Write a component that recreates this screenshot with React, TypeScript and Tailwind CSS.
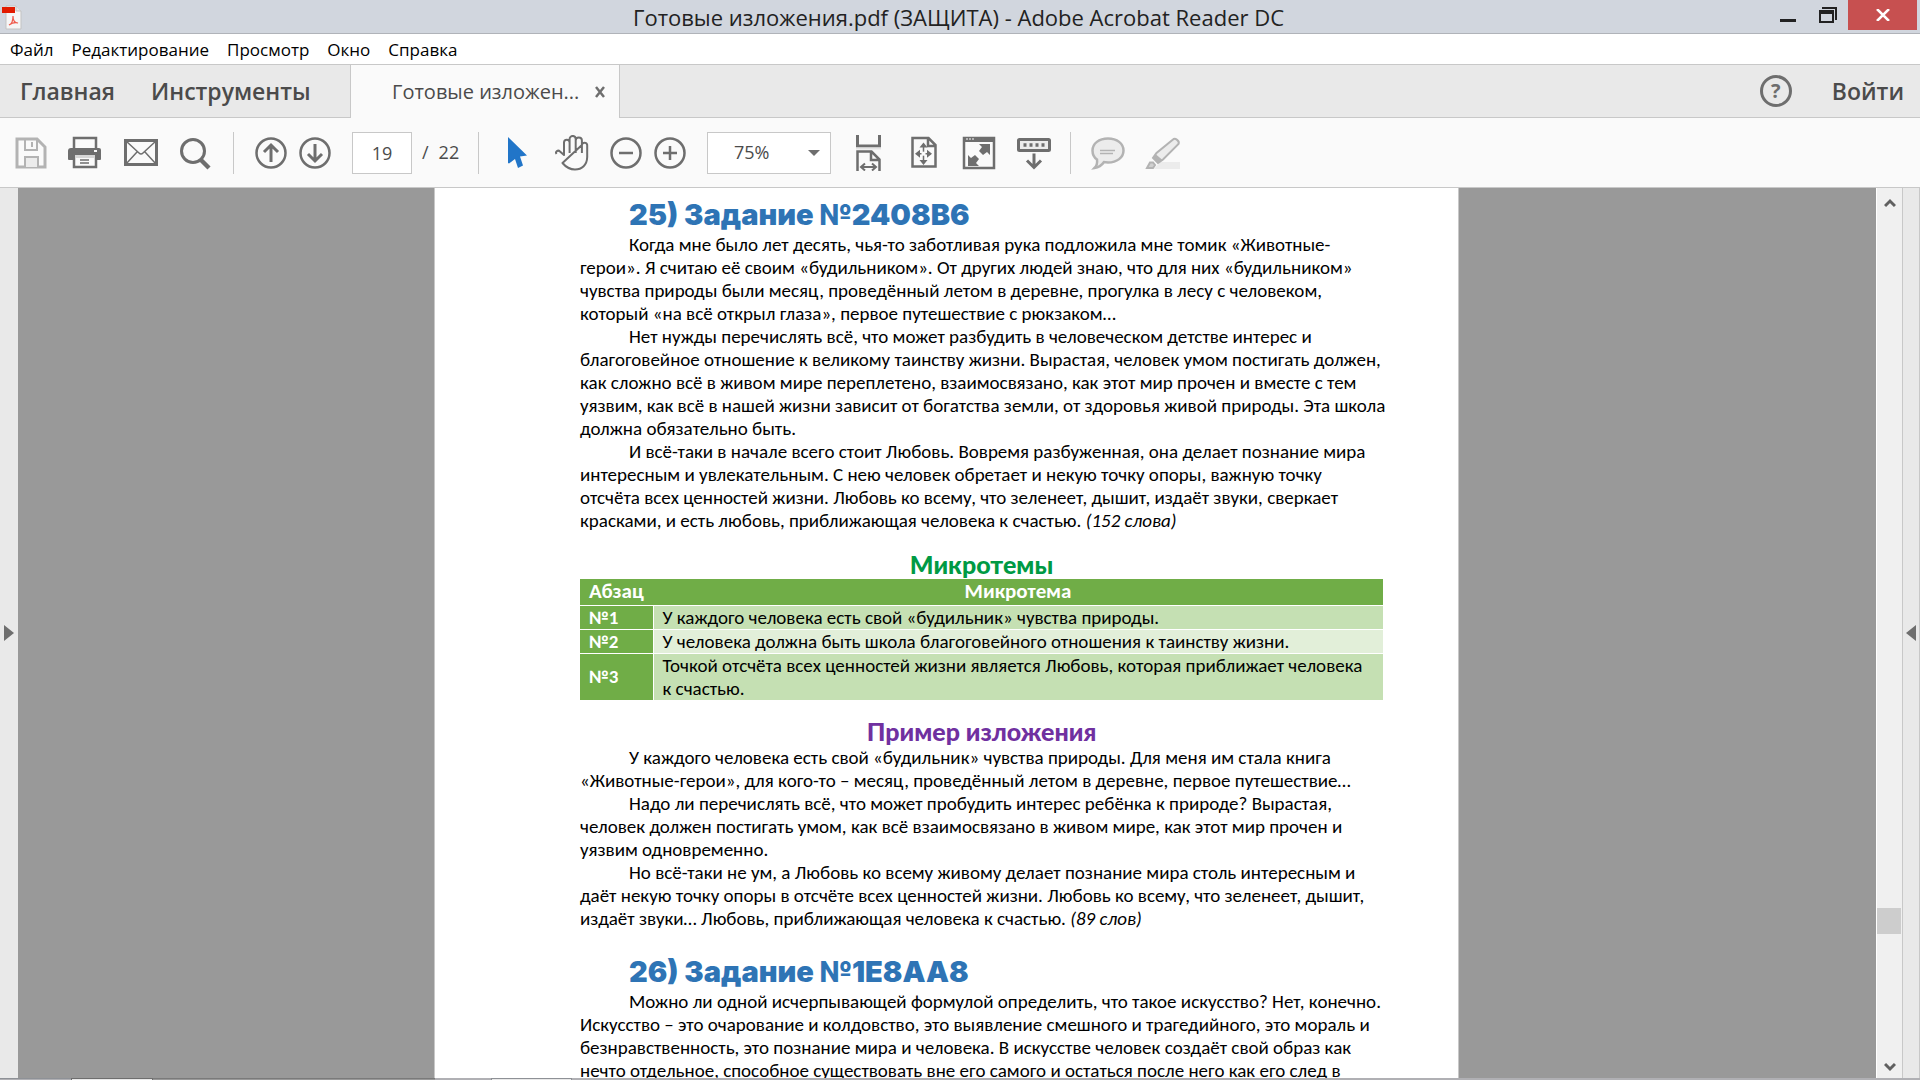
import type { ReactNode } from "react";

const MENU = ["Файл", "Редактирование", "Просмотр", "Окно", "Справка"];

const TASK_25 = [
  [
    "Когда мне было лет десять, чья-то заботливая рука подложила мне томик «Животные-",
    "герои». Я считаю её своим «будильником». От других людей знаю, что для них «будильником»",
    "чувства природы были месяц, проведённый летом в деревне, прогулка в лесу с человеком,",
    "который «на всё открыл глаза», первое путешествие с рюкзаком…",
  ],
  [
    "Нет нужды перечислять всё, что может разбудить в человеческом детстве интерес и",
    "благоговейное отношение к великому таинству жизни. Вырастая, человек умом постигать должен,",
    "как сложно всё в живом мире переплетено, взаимосвязано, как этот мир прочен и вместе с тем",
    "уязвим, как всё в нашей жизни зависит от богатства земли, от здоровья живой природы. Эта школа",
    "должна обязательно быть.",
  ],
  [
    "И всё-таки в начале всего стоит Любовь. Вовремя разбуженная, она делает познание мира",
    "интересным и увлекательным. С нею человек обретает и некую точку опоры, важную точку",
    "отсчёта всех ценностей жизни. Любовь ко всему, что зеленеет, дышит, издаёт звуки, сверкает",
    "красками, и есть любовь, приближающая человека к счастью. ",
  ],
];

const EXAMPLE = [
  [
    "У каждого человека есть свой «будильник» чувства природы. Для меня им стала книга",
    "«Животные-герои», для кого-то – месяц, проведённый летом в деревне, первое путешествие…",
  ],
  [
    "Надо ли перечислять всё, что может пробудить интерес ребёнка к природе? Вырастая,",
    "человек должен постигать умом, как всё взаимосвязано в живом мире, как этот мир прочен и",
    "уязвим одновременно.",
  ],
  [
    "Но всё-таки не ум, а Любовь ко всему живому делает познание мира столь интересным и",
    "даёт некую точку опоры в отсчёте всех ценностей жизни. Любовь ко всему, что зеленеет, дышит,",
    "издаёт звуки… Любовь, приближающая человека к счастью. ",
  ],
];

const TASK_26 = [
  [
    "Можно ли одной исчерпывающей формулой определить, что такое искусство? Нет, конечно.",
    "Искусство – это очарование и колдовство, это выявление смешного и трагедийного, это мораль и",
    "безнравственность, это познание мира и человека. В искусстве человек создаёт свой образ как",
    "нечто отдельное, способное существовать вне его самого и остаться после него как его след в",
  ],
];

const TOPICS = [
  { id: "№1", lines: ["У каждого человека есть свой «будильник» чувства природы."], bg: "bg-[#c5e0b3]" },
  { id: "№2", lines: ["У человека должна быть школа благоговейного отношения к таинству жизни."], bg: "bg-[#e2efd9]" },
  {
    id: "№3",
    lines: ["Точкой отсчёта всех ценностей жизни является Любовь, которая приближает человека", "к счастью."],
    bg: "bg-[#c5e0b3]",
  },
];

function Icon({ children, color = "text-[#6e6e6e]" }: { children: ReactNode; color?: string }) {
  return (
    <svg viewBox="0 0 36 36" fill="none" stroke="currentColor" strokeWidth="2.5" className={`h-9 w-9 ${color}`}>
      {children}
    </svg>
  );
}

function Tool({ label, narrow, children }: { label: string; narrow?: boolean; children: ReactNode }) {
  return (
    <button aria-label={label} className={`flex shrink-0 items-center justify-center ${narrow ? "w-11" : "w-[55px]"}`}>
      {children}
    </button>
  );
}

function Separator() {
  return <div className="h-[42px] w-px shrink-0 bg-[#c8c8c8]" />;
}

function Paragraphs({ items, note }: { items: string[][]; note?: string }) {
  return (
    <>
      {items.map((lines, i) => (
        <p key={i} className="whitespace-nowrap indent-[49px]">
          {lines.map((line, j) => (
            <span key={j}>
              {j > 0 && <br />}
              {line}
            </span>
          ))}
          {note && i === items.length - 1 && <em>{note}</em>}
        </p>
      ))}
    </>
  );
}

function TitleBar() {
  return (
    <header className="flex h-[34px] shrink-0 items-center border-b border-[#b0b3b9] bg-[#d1d6de] pr-[3px]">
      <div className="flex w-[150px] pl-0.5">
        <svg viewBox="0 0 24 26" className="h-[26px] w-6">
          <path d="M4 2h10l5 5v18H4z" fill="#f6f6f6" stroke="#c3c3c3" />
          <path d="M14 2v5h5" fill="#e4e4e4" stroke="#c3c3c3" />
          <path d="M0 3h13v6H0z" fill="#e21b00" />
          <path d="M7 21c3-1 4-5 4-9 0 5 2 7 5 7-4-1-6 0-9 2z" fill="none" stroke="#ef5a4c" strokeWidth="1.2" />
        </svg>
      </div>
      <h1 className="flex-1 text-center text-[22px] leading-7 text-[#222]">
        Готовые изложения.pdf (ЗАЩИТА) - Adobe Acrobat Reader DC
      </h1>
      <div className="flex h-full w-[150px] justify-end">
        <button aria-label="Свернуть" className="flex w-10 justify-center">
          <svg viewBox="0 0 16 30" className="h-[30px] w-4">
            <path d="M0 19h16v3H0z" fill="#222" />
          </svg>
        </button>
        <button aria-label="Восстановить" className="flex w-10 justify-center">
          <svg viewBox="0 0 18 30" className="h-[30px] w-[18px]" fill="none" stroke="#222">
            <path d="M3 8h14v12" strokeWidth="2" />
            <path d="M1 12v10h13V11z" strokeWidth="2" />
            <path d="M0 12h15" strokeWidth="4" />
          </svg>
        </button>
        <button aria-label="Закрыть" className="flex h-[30px] w-[69px] items-center justify-center bg-[#c75050]">
          <svg viewBox="0 0 14 12" className="h-3 w-3.5" stroke="#fff" strokeWidth="2.5">
            <path d="M1 0l12 12M13 0L1 12" />
          </svg>
        </button>
      </div>
    </header>
  );
}

function TabBar() {
  return (
    <div className="flex h-[53px] shrink-0 bg-[#e9e9e9] text-[23px] font-semibold text-[#4b4b4b]">
      <div className="flex w-[350px] items-center gap-9 border-b border-[#c8c8c8] pl-5">
        <button>Главная</button>
        <button>Инструменты</button>
      </div>
      <div className="flex w-[270px] items-center justify-between border-x border-[#c8c8c8] bg-[#fafafa] pr-[13px] pl-[41px]">
        <span className="text-[20px] font-normal">Готовые изложен...</span>
        <button aria-label="Закрыть вкладку">
          <svg viewBox="0 0 12 12" className="h-3 w-3" stroke="#6e6e6e" strokeWidth="2.5">
            <path d="M2 1l8 10M10 1L2 11" />
          </svg>
        </button>
      </div>
      <div className="flex flex-1 items-center justify-end gap-10 border-b border-[#c8c8c8] pr-4">
        <button
          aria-label="Помощь"
          className="flex h-8 w-8 items-center justify-center rounded-full border-[3px] border-[#6e6e6e] text-[20px] leading-none font-bold text-[#6e6e6e]"
        >
          ?
        </button>
        <button>Войти</button>
      </div>
    </div>
  );
}

function Toolbar() {
  return (
    <div className="flex h-[70px] shrink-0 items-center border-b border-[#c8c8c8] bg-[#fafafa] pl-[3px] text-[18px] text-[#4b4b4b]">
      <Tool label="Сохранить">
        <Icon color="text-[#b3b3b3]">
          <path d="M4 4h20l8 8v20H4z" strokeWidth="3" />
          <path d="M12 4v11h12V4M19 7v5" strokeWidth="2" />
          <path d="M12 32V22h13v10" fill="#ececec" strokeWidth="2" />
        </Icon>
      </Tool>
      <Tool label="Печать">
        <Icon>
          <path d="M6 14V3h22v11" />
          <path d="M3 13h28a2 2 0 0 1 2 2v9a1 1 0 0 1-1 1H1a1 1 0 0 1-1-1v-8a3 3 0 0 1 3-3z" fill="currentColor" stroke="none" />
          <path d="M6 19h22v13H6z" fill="#fafafa" />
          <path d="M7 20h20v3H7z" fill="#d6d6d6" stroke="none" />
          <path d="M12 25h9M12 28h9" strokeWidth="1.5" />
          <path d="M26 15h3v2h-3z" fill="#fafafa" stroke="none" />
        </Icon>
      </Tool>
      <Tool label="Отправить по почте">
        <Icon>
          <path d="M2.5 5.5h31v24h-31z" strokeWidth="3" />
          <path d="M3 6l13 12q2 2 4 0L33 6M3 29l11-12M33 29L22 17" strokeWidth="1.5" />
        </Icon>
      </Tool>
      <Tool label="Найти">
        <Icon>
          <circle cx="15" cy="16" r="11.5" strokeWidth="3" />
          <path d="M23 25l8 8" strokeWidth="4.5" />
        </Icon>
      </Tool>
      <div className="ml-2.5 flex items-center gap-[15px]">
        <Separator />
        <div className="flex">
          <Tool label="Предыдущая страница" narrow>
            <Icon>
              <circle cx="18" cy="18" r="14.5" />
              <path d="M18 27V11M11 17l7-7 7 7" strokeWidth="3" />
            </Icon>
          </Tool>
          <Tool label="Следующая страница" narrow>
            <Icon>
              <circle cx="18" cy="18" r="14.5" />
              <path d="M18 9v16M11 19l7 7 7-7" strokeWidth="3" />
            </Icon>
          </Tool>
        </div>
      </div>
      <div className="ml-[15px] flex w-[126px] items-center gap-2.5">
        <input
          aria-label="Номер страницы"
          defaultValue="19"
          className="h-[42px] w-[60px] border border-[#c8c8c8] bg-white text-center"
        />
        <span>/</span>
        <span>22</span>
      </div>
      <Separator />
      <div className="ml-[11px] flex">
        <Tool label="Выделение">
          <Icon color="text-[#2175c8]">
            <path d="M8 2l19 18.500-7 1 3 9-5 2.500-3-9-6 4.500-1-.5z" fill="currentColor" stroke="none" />
          </Icon>
        </Tool>
        <Tool label="Рука">
          <Icon>
            <path
              d="M1.500 19c-1.500-2.500 1.500-4.500 3.500-2.500L9 20V7.500a2.800 2.800 0 0 1 5.600 0V18M14.600 7.500V4a3 3 0 0 1 6.100 0v14M20.700 5.500a3.100 3.100 0 0 1 6.200 0V18M26.900 10a2.700 2.700 0 0 1 5.300 0v12C32 30 27 34.500 20 34.500S10 31 7.500 28z"
              strokeWidth="2"
              strokeLinejoin="round"
            />
          </Icon>
        </Tool>
      </div>
      <div className="ml-1 flex">
        <Tool label="Уменьшить" narrow>
          <Icon>
            <circle cx="18" cy="18" r="14.5" />
            <path d="M11 18h14" />
          </Icon>
        </Tool>
        <Tool label="Увеличить" narrow>
          <Icon>
            <circle cx="18" cy="18" r="14.5" />
            <path d="M11 18h14M18 11v14" />
          </Icon>
        </Tool>
      </div>
      <div className="relative mr-2.5 ml-[15px]">
        <select
          aria-label="Масштаб"
          className="h-[42px] w-[124px] appearance-none border border-[#c8c8c8] bg-white pl-[26px]"
        >
          <option>75%</option>
        </select>
        <svg viewBox="0 0 12 6" className="pointer-events-none absolute top-[18px] right-[11px] h-1.5 w-3">
          <path d="M0 0h12L6 6z" fill="#6e6e6e" />
        </svg>
      </div>
      <Tool label="По ширине">
        <Icon>
          <path d="M6.500 0v11h22V0" strokeWidth="3" />
          <path d="M5 13.500h25" stroke="#e4e4e4" strokeWidth="2" />
          <path d="M6.500 36V16.500h14l8 8V36M20 17v8h8" />
          <path d="M11 32h13M14 28.500L10 32l4 3.500M21 28.500l4 3.500-4 3.500" strokeWidth="2" />
        </Icon>
      </Tool>
      <Tool label="Страница целиком">
        <Icon>
          <path d="M6.500 3h16l7 7v21.500h-23zM22 3v8h7" />
          <path d="M17.500 12v14M11 18.700h14" strokeWidth="1.500" />
          <path
            d="M17.500 7.500l4 5h-8zM17.500 30l4-5h-8zM9 18.700l5-4v8zM26 18.700l-5-4v8z"
            fill="currentColor"
            stroke="none"
          />
          <path d="M15.500 16.700h4v4h-4z" fill="#fafafa" stroke="none" />
        </Icon>
      </Tool>
      <Tool label="Полный экран">
        <Icon>
          <path d="M3 3h30v30H3z" />
          <path d="M2 2h32v5H2z" fill="currentColor" stroke="none" />
          <path d="M5 4h2M8 4h2M11 4h2" stroke="#fafafa" strokeWidth="1" />
          <path d="M18 9h11v11l-3-3-4 3-4-4 3-4zM7 31V20l3 3 4-3 4 4-3 4 3 3z" fill="currentColor" stroke="none" />
        </Icon>
      </Tool>
      <Tool label="Панель инструментов">
        <Icon>
          <rect x="2.500" y="4.500" width="31" height="11" rx="1" fill="#ececec" strokeWidth="3" />
          <path d="M7.500 10h3M13.500 10h3M19.500 10h3M25.500 10h3" strokeWidth="3.500" />
          <path d="M18 18.500V32M11 25.500l7 7 7-7" strokeWidth="3" />
        </Icon>
      </Tool>
      <div className="mx-[9px]">
        <Separator />
      </div>
      <Tool label="Комментарий">
        <Icon color="text-[#b3b3b3]">
          <path
            d="M18 3.500c9 0 15.500 5 15.500 12s-6.500 12-15.500 12l-4-.5c-2 3-5 5.500-9.500 6 2-2 3-5 2.500-8.500-3-2-4.500-5-4.500-9 0-7 6.500-12 15.500-12z"
            fill="#ececec"
          />
          <path d="M10 15.500h15M10 18.500h13" strokeWidth="1.500" />
        </Icon>
      </Tool>
      <Tool label="Маркер">
        <Icon color="text-[#b3b3b3]">
          <path d="M15 27h20v7H9z" fill="#ececec" stroke="none" />
          <path d="M28 4.500c2-2 7 1.500 5.500 4.500L18 24.500l-5 3.500-5-5 3.500-5z" fill="#ececec" strokeWidth="2" />
          <path d="M10.500 19l7 6-4 3-6-5.500z" fill="currentColor" stroke="none" />
          <path d="M2 33l3-5.500h3l2 2.500-2 3z" fill="#d0d0d0" strokeWidth="2" />
        </Icon>
      </Tool>
    </div>
  );
}

function TaskTitle({ children }: { children: ReactNode }) {
  return (
    <h2 className="pl-[49px] font-['Inter'] text-[29px] leading-[36px] font-black whitespace-nowrap text-[#2e74b5]">
      {children}
    </h2>
  );
}

function DocumentPage() {
  return (
    <article className="mx-auto w-[1025px] shrink-0 overflow-hidden border-x border-[#c8c8c8] bg-white pt-[9px] pr-[75px] pl-[145px] font-['Carlito','Lato',sans-serif] text-[19px] leading-[23px] text-black">
      <TaskTitle>25) Задание №2408B6</TaskTitle>
      <Paragraphs items={TASK_25} note="(152 слова)" />

      <h3 className="mt-[17px] text-center font-['Lato'] text-[25px] leading-[30px] font-black text-[#009a44]">
        Микротемы
      </h3>
      <table className="w-full border-collapse text-left">
        <thead>
          <tr className="h-[26px] border-b border-white bg-[#70ad47] text-[21px] text-white">
            <th className="w-[73px] px-[9px] py-0">Абзац</th>
            <th className="px-[9px] py-0 text-center">Микротема</th>
          </tr>
        </thead>
        <tbody>
          {TOPICS.map((topic) => (
            <tr key={topic.id} className="border-b border-white">
              <th className="border-r border-white bg-[#70ad47] px-[9px] py-0 text-white">{topic.id}</th>
              <td className={`px-[9px] py-0 whitespace-nowrap ${topic.bg}`}>
                {topic.lines.map((line) => (
                  <div key={line}>{line}</div>
                ))}
              </td>
            </tr>
          ))}
        </tbody>
      </table>

      <h3 className="mt-[15px] text-center font-['Lato'] text-[25px] leading-[30px] font-black text-[#7030a0]">
        Пример изложения
      </h3>
      <Paragraphs items={EXAMPLE} note="(89 слов)" />

      <div className="mt-6">
        <TaskTitle>26) Задание №1E8AA8</TaskTitle>
        <Paragraphs items={TASK_26} />
      </div>
    </article>
  );
}

export default function App() {
  return (
    <div className="flex h-screen flex-col overflow-hidden bg-white font-['Segoe_UI','Open_Sans',sans-serif]">
      <TitleBar />
      <nav className="flex h-[31px] shrink-0 items-center gap-[18px] border-b border-[#c8c8c8] bg-white pt-px pl-2.5 text-[17px] text-black">
        {MENU.map((item) => (
          <button key={item}>{item}</button>
        ))}
      </nav>
      <TabBar />
      <Toolbar />

      <main className="flex min-h-0 flex-1">
        <button aria-label="Показать левую панель" className="flex w-[18px] items-center bg-[#e9e9e9] pl-1">
          <svg viewBox="0 0 10 16" className="h-4 w-2.5">
            <path d="M0 0v16l10-8z" fill="#6e6e6e" />
          </svg>
        </button>
        <div className="flex min-w-0 flex-1 overflow-hidden bg-[#999] pr-px">
          <DocumentPage />
        </div>
        <div className="flex w-[26px] flex-col items-center border-l border-white bg-[#f0f0f0]">
          <button aria-label="Вверх" className="flex h-[30px] items-center">
            <svg viewBox="0 0 12 10" className="h-2.5 w-3" fill="none" stroke="#606060" strokeWidth="3">
              <path d="M1 8l5-5 5 5" />
            </svg>
          </button>
          <div className="flex w-full flex-1 flex-col">
            <div className="flex-[690]" />
            <div className="mr-px h-[26px] bg-[#cdcdcd]" />
            <div className="flex-[122]" />
          </div>
          <button aria-label="Вниз" className="flex h-[22px] items-center">
            <svg viewBox="0 0 12 10" className="h-2.5 w-3" fill="none" stroke="#606060" strokeWidth="3">
              <path d="M1 2l5 5 5-5" />
            </svg>
          </button>
        </div>
        <button
          aria-label="Показать правую панель"
          className="flex w-[18px] items-center border-x border-[#c8c8c8] bg-[#e9e9e9] pl-[3px]"
        >
          <svg viewBox="0 0 10 16" className="h-4 w-2.5">
            <path d="M10 0v16L0 8z" fill="#6e6e6e" />
          </svg>
        </button>
      </main>
      <footer className="flex h-0.5 shrink-0 bg-[#b0b0b4]">
        <div className="w-[71px] border-t border-[#8e9196]" />
        <div className="w-[82px] border-x border-t border-[#6e6e6e] bg-[#e9e9e9]" />
        <div className="w-[282px] border-t border-[#7a7a7a] bg-[#999]" />
        <div className="w-14" />
        <div className="w-[81px] border-x border-t border-[#8e9196] bg-[#e9e9e9]" />
      </footer>
    </div>
  );
}
